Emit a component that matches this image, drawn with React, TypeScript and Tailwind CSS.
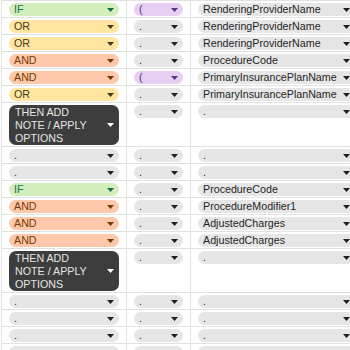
import React from "react";

type Tone = "green" | "yellow" | "orange" | "purple" | "gray" | "dark";

const tones: Record<Tone, { chip: string; arrow: string }> = {
  green: { chip: "bg-[#d4edbc] text-[#11734b]", arrow: "#11734b" },
  yellow: { chip: "bg-[#ffe5a0] text-[#473821]", arrow: "#473821" },
  orange: { chip: "bg-[#ffc8aa] text-[#753800]", arrow: "#753800" },
  purple: { chip: "bg-[#e6cff2] text-[#5a3286]", arrow: "#5a3286" },
  gray: { chip: "bg-[#e6e6e6] text-[#1f1f1f]", arrow: "#1f1f1f" },
  dark: { chip: "bg-[#3d3d3d] text-[#e6e6e6]", arrow: "#ffffff" },
};

const Arrow = ({ color }: { color: string }) => (
  <svg width="7" height="4" viewBox="0 0 7 4" className="shrink-0">
    <path d="M0 0 L7 0 L3.5 4 Z" fill={color} />
  </svg>
);

const Chip = ({ label, tone }: { label: string; tone: Tone }) => {
  const t = tones[tone];
  if (tone === "dark") {
    return (
      <div
        className={`flex h-[40px] items-center justify-between rounded-[7px] pl-[6px] pr-[5px] ${t.chip}`}
      >
        <span className="whitespace-pre-line text-[10.7px] leading-[13px]">
          {label}
        </span>
        <Arrow color={t.arrow} />
      </div>
    );
  }
  return (
    <div
      className={`flex h-[13px] items-center justify-between overflow-hidden whitespace-nowrap rounded-full pl-[5px] pr-[5px] ${t.chip}`}
    >
      <span className="text-[10.7px] leading-[13px]">{label}</span>
      <Arrow color={t.arrow} />
    </div>
  );
};

type Row = {
  op: [string, Tone];
  paren: [string, Tone];
  field: string;
  tall?: boolean;
};

const THEN = "THEN ADD\nNOTE / APPLY\nOPTIONS";

const rows: Row[] = [
  { op: ["IF", "green"], paren: ["(", "purple"], field: "RenderingProviderName" },
  { op: ["OR", "yellow"], paren: [".", "gray"], field: "RenderingProviderName" },
  { op: ["OR", "yellow"], paren: [".", "gray"], field: "RenderingProviderName" },
  { op: ["AND", "orange"], paren: [".", "gray"], field: "ProcedureCode" },
  { op: ["AND", "orange"], paren: ["(", "purple"], field: "PrimaryInsurancePlanName" },
  { op: ["OR", "yellow"], paren: [".", "gray"], field: "PrimaryInsurancePlanName" },
  { op: [THEN, "dark"], paren: [".", "gray"], field: ".", tall: true },
  { op: [".", "gray"], paren: [".", "gray"], field: "." },
  { op: [".", "gray"], paren: [".", "gray"], field: "." },
  { op: ["IF", "green"], paren: [".", "gray"], field: "ProcedureCode" },
  { op: ["AND", "orange"], paren: [".", "gray"], field: "ProcedureModifier1" },
  { op: ["AND", "orange"], paren: [".", "gray"], field: "AdjustedCharges" },
  { op: ["AND", "orange"], paren: [".", "gray"], field: "AdjustedCharges" },
  { op: [THEN, "dark"], paren: [".", "gray"], field: ".", tall: true },
  { op: [".", "gray"], paren: [".", "gray"], field: "." },
  { op: [".", "gray"], paren: [".", "gray"], field: "." },
  { op: [".", "gray"], paren: [".", "gray"], field: "." },
];

export default function App() {
  return (
    <div
      className="h-[350px] w-[350px] overflow-hidden bg-white"
      style={{ fontFamily: '"Liberation Sans", Arial, sans-serif' }}
    >
      <div className="ml-px w-[400px] border-l border-t border-[#e1e1e1]">
        {rows.map((r, i) => (
          <div
            key={i}
            className={`grid grid-cols-[125px_64px_172px] border-b border-[#e1e1e1] ${
              r.tall ? "h-[44px]" : "h-[17px]"
            }`}
          >
            <div className="border-r border-[#e1e1e1] px-[7px] pt-[2px]">
              <Chip label={r.op[0]} tone={r.op[1]} />
            </div>
            <div className="border-r border-[#e1e1e1] px-[7px] pt-[2px]">
              <Chip label={r.paren[0]} tone={r.paren[1]} />
            </div>
            <div className="border-r border-[#e1e1e1] px-[7px] pt-[2px]">
              <Chip label={r.field} tone="gray" />
            </div>
          </div>
        ))}
        <div className="grid h-[17px] grid-cols-[125px_64px_172px]">
          <div className="border-r border-[#e1e1e1] px-[7px] pt-[2px]">
            <div className="h-[13px] rounded-full bg-[#e6e6e6]" />
          </div>
          <div className="border-r border-[#e1e1e1] px-[7px] pt-[2px]">
            <div className="h-[13px] rounded-full bg-[#e6e6e6]" />
          </div>
          <div className="border-r border-[#e1e1e1] px-[7px] pt-[2px]">
            <div className="h-[13px] rounded-full bg-[#e6e6e6]" />
          </div>
        </div>
      </div>
    </div>
  );
}
